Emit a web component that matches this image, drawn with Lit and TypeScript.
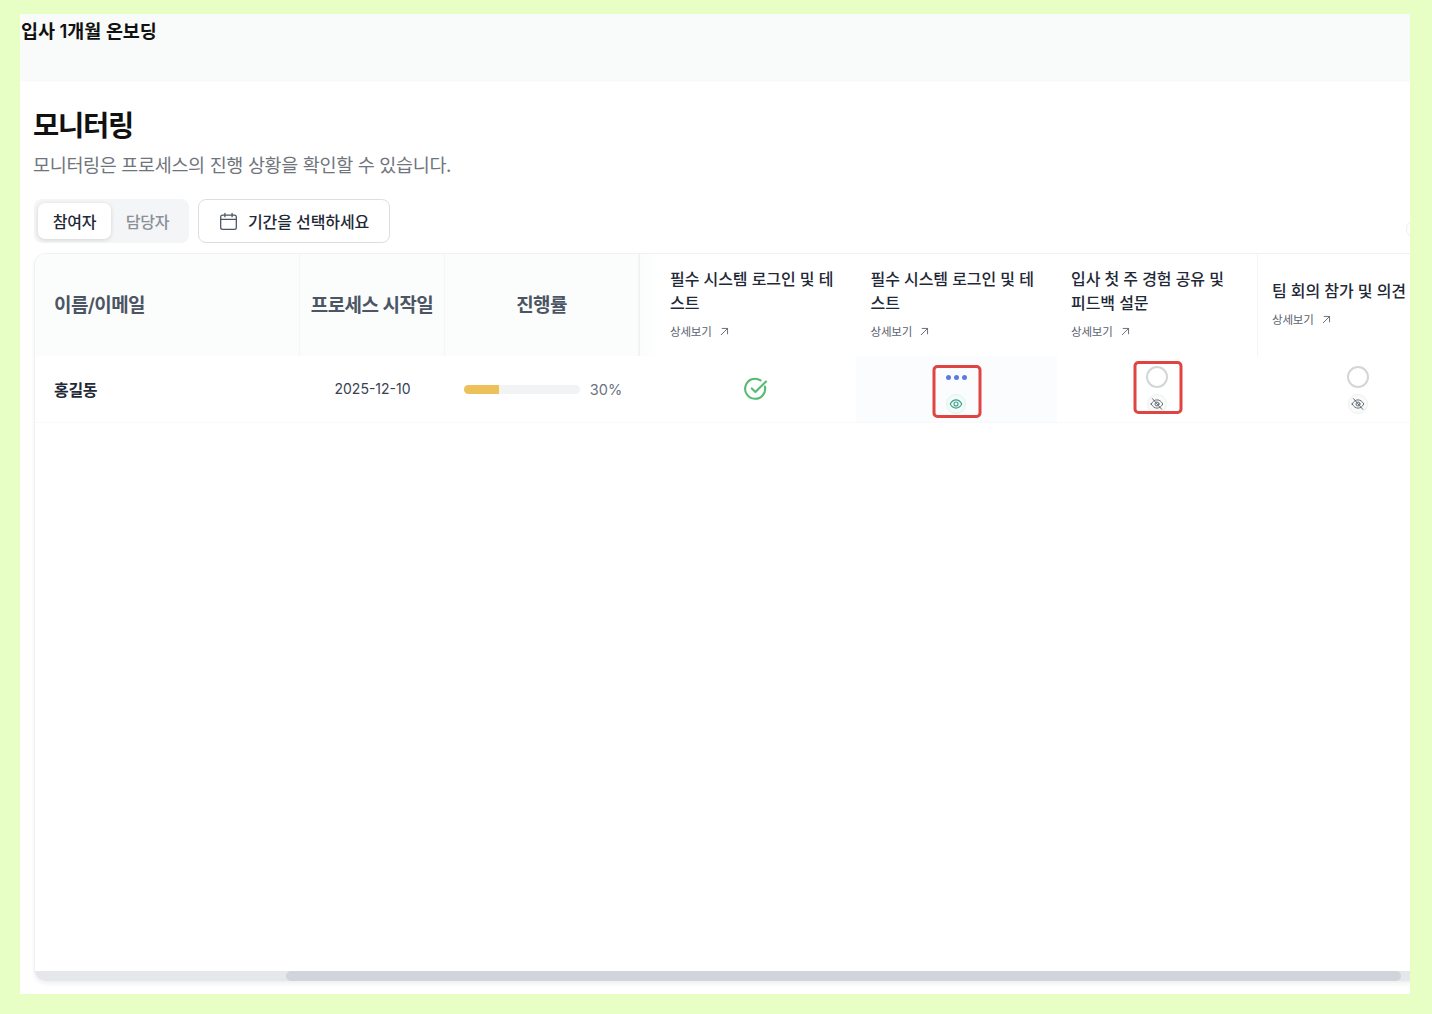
import { LitElement, html, css, svg } from "lit";
import { customElement } from "lit/decorators.js";

const calendar = html`<svg class="cal" viewBox="0 0 18 18" fill="none" stroke="#4b5563" stroke-width="1.2" stroke-linecap="round" stroke-linejoin="round"><rect x="1.6" y="3" width="14.8" height="13.4" rx="1.8"/><path d="M1.6 7h14.8M5.6 1.2v3.2M12.4 1.2v3.2"/></svg>`;
const arrow = html`<svg class="arrow" viewBox="0 0 10 10" fill="none" stroke="#5b6270" stroke-width="1" stroke-linecap="round" stroke-linejoin="round"><path d="M1.4 8.6 8.4 1.6M2.4 1.6h6v6"/></svg>`;
const check = html`<svg class="check" viewBox="0 0 24 24" fill="none" stroke="#55bb70" stroke-width="2.1" stroke-linecap="round" stroke-linejoin="round"><path d="M20.9 9.6A10 10 0 1 1 16.6 3.4"/><path d="M7.8 11.4l3.6 3.6L22 4.6"/></svg>`;
const eyePaths = svg`<path d="M1.2 7C2.8 4.2 4.7 2.9 7 2.9s4.2 1.3 5.8 4.1c-1.6 2.8-3.5 4.1-5.8 4.1S2.8 9.8 1.2 7Z"/><circle cx="7" cy="7" r="2"/>`;
const eye = html`<span class="eye on"><svg viewBox="0 0 14 14" fill="none" stroke="#3f9c8a" stroke-width="1.1">${eyePaths}</svg></span>`;
const eyeOff = html`<span class="eye"><svg viewBox="0 0 14 14" fill="none" stroke="#666c76" stroke-width="1" stroke-linecap="round">${eyePaths}<path d="M2.4 1.6l9.4 10.8"/></svg></span>`;

interface Task { title: string; kind: "done" | "progress" | "todo"; marked: boolean; first?: boolean; }
const tasks: Task[] = [
  { title: "필수 시스템 로그인 및 테스트", kind: "done", marked: false, first: true },
  { title: "필수 시스템 로그인 및 테스트", kind: "progress", marked: true },
  { title: "입사 첫 주 경험 공유 및 피드백 설문", kind: "todo", marked: true },
  { title: "팀 회의 참가 및 의견", kind: "todo", marked: false },
];

@customElement("app-root")
export class AppRoot extends LitElement {
  static styles = css`
    :host { display: block; height: 1014px; box-sizing: border-box; padding: 14px 22px 20px 20px; background: #e7ffc5; font-family: Inter, "Noto Sans CJK KR", sans-serif; color: #111827; overflow: hidden; }
    * { box-sizing: border-box; }
    .frame { height: 100%; background: #fff; display: flex; flex-direction: column; overflow: hidden; }
    .top { height: 66px; flex: none; background: #f9fbfa; box-shadow: 0 1px 2px rgba(0,0,0,.04); padding: 4px 0 0 1px; font-size: 18.5px; font-weight: 600; line-height: 26px; letter-spacing: -0.05px; color: #111; }
    .content { flex: 1; min-height: 0; display: flex; flex-direction: column; padding: 26px 0 12px 14px; position: relative; }
    h1 { margin: 0 0 0 -1px; font-size: 28.5px; font-weight: 700; line-height: 40px; letter-spacing: -1.2px; color: #111; }
    .sub { margin: 5px 0 0 -1px; font-size: 18.5px; font-weight: 400; line-height: 28px; letter-spacing: -0.33px; color: #70757d; }
    .controls { display: flex; gap: 9px; margin-top: 20px; }
    .tabs { display: flex; align-items: center; height: 44px; width: 155px; padding: 4px; border-radius: 8px; background: #f4f5f6; }
    .tab { height: 36px; display: flex; align-items: center; justify-content: center; font-size: 16px; font-weight: 500; letter-spacing: -0.3px; color: #8b9099; width: 73px; border-radius: 7px; }
    .tab.active { color: #1f2937; background: #fff; box-shadow: 0 1px 4px rgba(0,0,0,.14); }
    .date { height: 44px; width: 192px; border: 1.5px solid #dcdee2; border-radius: 8px; background: #fff; display: flex; align-items: center; gap: 10px; padding-left: 20px; font-size: 16px; font-weight: 500; letter-spacing: -0.1px; color: #1f2937; }
    .cal { width: 19px; height: 19px; flex: none; }
    .edge { position: absolute; right: -14px; top: 140px; width: 18px; height: 18px; border-radius: 50%; background: #fff; border: 1px solid #eceef0; }
    .table { flex: 1; min-height: 0; margin-top: 10px; display: flex; flex-direction: column; border: 1px solid #f0f1f2; border-right: 0; border-radius: 12px 0 0 12px; box-shadow: 0 2px 4px rgba(0,0,0,.06); overflow: hidden; }
    .rows { flex: 1; min-height: 0; overflow: hidden; }
    .grid { display: grid; grid-template-columns: 265px 145px 194px 217px 200.5px 201px 200.5px; }
    .th { height: 102px; display: flex; align-items: center; font-size: 19px; font-weight: 600; letter-spacing: -0.6px; color: #4b5563; background: #fbfcfc; border-right: 1px solid #f4f5f6; padding-bottom: 4px; }
    .th.name { padding-left: 19px; }
    .th.center { justify-content: center; }
    .th.task { flex-direction: column; align-items: flex-start; justify-content: center; padding: 0 14.5px 3px; background: #fff; color: #1f2937; font-size: 16px; font-weight: 500; letter-spacing: -0.07px; line-height: 24px; border-right: 0; }
    .th.task.first { padding-left: 30px; border-left: 1px solid #f0f1f2; background: linear-gradient(90deg, #fbfcfc, #fff 20px); }
    .th.task.divided { border-right: 1px solid #f3f4f5; }
    .title { white-space: normal; }
    .more { display: flex; align-items: center; gap: 8px; margin-top: 8px; font-size: 11.5px; font-weight: 400; line-height: 18px; letter-spacing: -0.2px; color: #5b6270; }
    .arrow { width: 9px; height: 9px; }
    .td { height: 67px; display: flex; align-items: center; justify-content: center; border-bottom: 1px solid #f8f9f9; font-size: 14px; color: #374151; }
    .td.date-cell { padding-bottom: 1px; }
    .td.name { justify-content: flex-start; padding: 0 0 1px 19px; font-size: 16px; font-weight: 600; letter-spacing: -0.3px; color: #1f2937; }
    .progress { gap: 10px; padding-left: 2px; font-size: 14.5px; color: #6b7280; }
    .bar { width: 116px; height: 9px; border-radius: 5px; background: #f1f3f5; overflow: hidden; }
    .bar span { display: block; height: 100%; background: #ecc15a; }
    .status { position: relative; flex-direction: column; justify-content: flex-start; padding-top: 10px; }
    .status.first { padding-left: 16px; justify-content: center; padding-top: 0; }
    .status.hl { background: #fbfcfd; }
    .check { width: 24px; height: 24px; }
    .circle { width: 22px; height: 22px; border-radius: 50%; border: 2px solid #d4d5d7; flex: none; }
    .dots { width: 22px; height: 22px; display: flex; align-items: center; justify-content: center; gap: 3px; flex: none; }
    .dots i { width: 5px; height: 5px; border-radius: 50%; background: #5b7be0; }
    .eye { width: 20px; height: 20px; margin-top: 6px; border-radius: 50%; background: #f9fafa; border: 1px solid #eef0f1; display: flex; align-items: center; justify-content: center; flex: none; }
    .eye.on { background: #f1fbf8; border-color: #dff3ec; }
    .eye svg { width: 14px; height: 14px; }
    .mark { position: absolute; left: 50%; width: 49px; transform: translateX(calc(-50% + 1px)); border: 3px solid #e04440; border-radius: 5px; }
    .mark.progress-mark { top: 9px; height: 53px; }
    .mark.todo-mark { top: 5px; height: 53px; }
    .track { height: 10px; flex: none; background: #e5e7ea; padding-left: 251px; padding-right: 9px; }
    .thumb { height: 100%; background: #d1d4da; border-radius: 6px; }
  `;

  private cell(t: Task) {
    const cls = `td status ${t.first ? "first" : ""} ${t.kind === "progress" ? "hl" : ""}`;
    if (t.kind === "done") return html`<div class=${cls}>${check}</div>`;
    return html`<div class=${cls}>
      ${t.kind === "progress" ? html`<span class="dots"><i></i><i></i><i></i></span>${eye}` : html`<span class="circle"></span>${eyeOff}`}
      ${t.marked ? html`<span class="mark ${t.kind === "progress" ? "progress-mark" : "todo-mark"}"></span>` : ""}
    </div>`;
  }

  render() {
    return html`<div class="frame">
      <div class="top">입사 1개월 온보딩</div>
      <div class="content">
        <h1>모니터링</h1>
        <p class="sub">모니터링은 프로세스의 진행 상황을 확인할 수 있습니다.</p>
        <div class="controls">
          <div class="tabs"><div class="tab active">참여자</div><div class="tab">담당자</div></div>
          <div class="date">${calendar}<span>기간을 선택하세요</span></div>
        </div>
        <span class="edge"></span>
        <div class="table">
          <div class="rows">
            <div class="grid">
              <div class="th name">이름/이메일</div>
              <div class="th center">프로세스 시작일</div>
              <div class="th center">진행률</div>
              ${tasks.map((t, i) => html`<div class="th task ${t.first ? "first" : ""} ${i === 2 ? "divided" : ""}">
                <div class="title">${t.title}</div>
                <div class="more">상세보기 ${arrow}</div>
              </div>`)}
              <div class="td name">홍길동</div>
              <div class="td date-cell">2025-12-10</div>
              <div class="td progress"><div class="bar"><span style="width:30%"></span></div>30%</div>
              ${tasks.map((t) => this.cell(t))}
            </div>
          </div>
          <div class="track"><div class="thumb"></div></div>
        </div>
      </div>
    </div>`;
  }
}
